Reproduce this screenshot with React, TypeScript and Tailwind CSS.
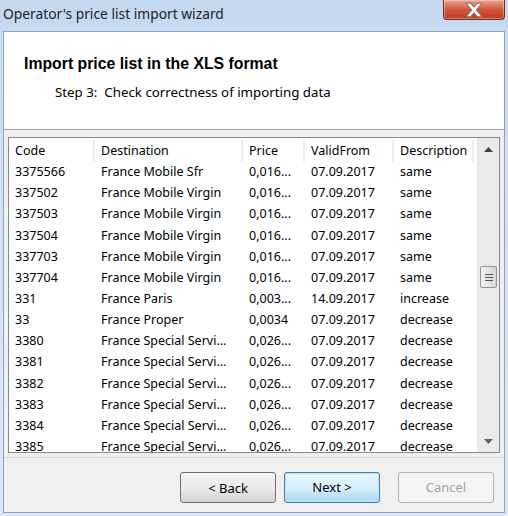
import React from "react";

const ROWS: [string, string, string, string, string][] = [
  ["3375566", "France Mobile Sfr", "0,016...", "07.09.2017", "same"],
  ["337502", "France Mobile Virgin", "0,016...", "07.09.2017", "same"],
  ["337503", "France Mobile Virgin", "0,016...", "07.09.2017", "same"],
  ["337504", "France Mobile Virgin", "0,016...", "07.09.2017", "same"],
  ["337703", "France Mobile Virgin", "0,016...", "07.09.2017", "same"],
  ["337704", "France Mobile Virgin", "0,016...", "07.09.2017", "same"],
  ["331", "France Paris", "0,003...", "14.09.2017", "increase"],
  ["33", "France Proper", "0,0034", "07.09.2017", "decrease"],
  ["3380", "France Special Servi...", "0,026...", "07.09.2017", "decrease"],
  ["3381", "France Special Servi...", "0,026...", "07.09.2017", "decrease"],
  ["3382", "France Special Servi...", "0,026...", "07.09.2017", "decrease"],
  ["3383", "France Special Servi...", "0,026...", "07.09.2017", "decrease"],
  ["3384", "France Special Servi...", "0,026...", "07.09.2017", "decrease"],
  ["3385", "France Special Servi...", "0,026...", "07.09.2017", "decrease"],
];

const HEADERS = ["Code", "Destination", "Price", "ValidFrom", "Description"];
const COLS = "grid grid-cols-[86px_148px_62px_89px_80px]";

function CloseButton() {
  return (
    <div className="absolute right-[3px] top-0 flex h-[20px] w-[62px] items-center justify-center rounded-b-[4px] border border-t-0 border-[#7a2a22] bg-gradient-to-b from-[#e8a494] via-[#d2553d] to-[#c23a22] shadow-[inset_0_0_0_1px_rgba(255,255,255,0.35)]">
      <svg width="22" height="16" viewBox="0 0 18 14">
        <path
          d="M2 1 L6 1 L9 4.5 L12 1 L16 1 L11 7 L16 13 L12 13 L9 9.5 L6 13 L2 13 L7 7 Z"
          fill="#f4f4f4"
          stroke="#6b6b6b"
          strokeWidth="0.8"
        />
      </svg>
    </div>
  );
}

function Scrollbar() {
  return (
    <div className="flex w-[22px] flex-col border-l border-[#e6e6e6] bg-[#eaeaea]">
      <div className="flex h-[22px] items-center justify-center">
        <svg width="9" height="5" viewBox="0 0 9 5">
          <path d="M0 5 L4.5 0 L9 5 Z" fill="#404040" />
        </svg>
      </div>
      <div className="flex-1 pt-[106px]">
        <div className="mx-auto flex h-[22px] w-[17px] flex-col items-center justify-center gap-[2px] rounded-[2px] border border-[#979797] bg-gradient-to-r from-[#f0f0f0] to-[#d8d8d8]">
          <div className="h-px w-[8px] bg-[#555]" />
          <div className="h-px w-[8px] bg-[#555]" />
          <div className="h-px w-[8px] bg-[#555]" />
        </div>
      </div>
      <div className="flex h-[22px] items-center justify-center">
        <svg width="9" height="5" viewBox="0 0 9 5">
          <path d="M0 0 L9 0 L4.5 5 Z" fill="#606060" />
        </svg>
      </div>
    </div>
  );
}

function Grid() {
  return (
    <div className="mx-[4px] mt-[7px] flex h-[316px] border border-[#828790] bg-white">
      <div className="flex-1 overflow-hidden pt-[2px]">
        <div className={`${COLS} h-[22px] items-center`}>
          {HEADERS.map((h) => (
            <div key={h} className="border-r-2 border-[#eeeeee] pl-[6px] leading-[22px]">
              {h}
            </div>
          ))}
        </div>
        {ROWS.map((r, i) => (
          <div key={i} className={`${COLS} h-[21.15px] items-center`}>
            {r.map((c, j) => (
              <div key={j} className="whitespace-nowrap pl-[6px]">
                {c}
              </div>
            ))}
          </div>
        ))}
      </div>
      <Scrollbar />
    </div>
  );
}

export default function App() {
  return (
    <div
      className="relative h-[516px] w-[508px] overflow-hidden bg-gradient-to-b from-[#c4d9f0] via-[#d5e4f5] to-[#dbe8f6] text-[12.5px] text-black"
      style={{ fontFamily: '"Segoe UI", "Noto Sans", sans-serif' }}
    >
      {/* Title bar */}
      <div className="flex h-[30px] items-center pb-[1px] pl-[3px] text-[13.8px] text-[#1e1e1e]">
        Operator's price list import wizard
      </div>
      <CloseButton />

      {/* Client area */}
      <div className="mx-[3px] mt-[1px] flex h-[482px] flex-col border border-[#8ea3bb] bg-[#f0f0f0]">
        {/* Header */}
        <div className="h-[98px] border-b border-[#a0a0a0] bg-white">
          <div
            className="pl-[20px] pt-[20px] text-[15.8px] font-bold"
            style={{ fontFamily: '"Liberation Sans", Tahoma, sans-serif' }}
          >
            Import price list in the XLS format
          </div>
          <div className="pl-[51px] pt-[7px] text-[13.3px]">Step 3:&nbsp; Check correctness of importing data</div>
        </div>

        <Grid />

        <div className="mt-[4px] border-t border-[#d5d5d5]" />

        {/* Buttons */}
        <div className="flex justify-end gap-[8px] pr-[10px] pt-[14px] text-[13px]">
          <button className="h-[31px] w-[96px] rounded-[3px] border border-[#707070] bg-gradient-to-b from-[#f2f2f2] via-[#ebebeb] to-[#d5d5d5] pt-[2px] text-black">
            &lt; Back
          </button>
          <button className="h-[31px] w-[96px] rounded-[3px] border border-[#3c7fb1] bg-gradient-to-b from-[#eaf6fd] via-[#d9f0fc] to-[#a7d9f5] text-black shadow-[inset_0_0_0_1px_#bfe6fa]">
            Next &gt;
          </button>
          <button className="ml-[10px] h-[31px] w-[96px] rounded-[3px] border border-[#adb2b5] bg-[#f4f4f4] text-[#a3a3a3]">
            Cancel
          </button>
        </div>
      </div>
    </div>
  );
}
